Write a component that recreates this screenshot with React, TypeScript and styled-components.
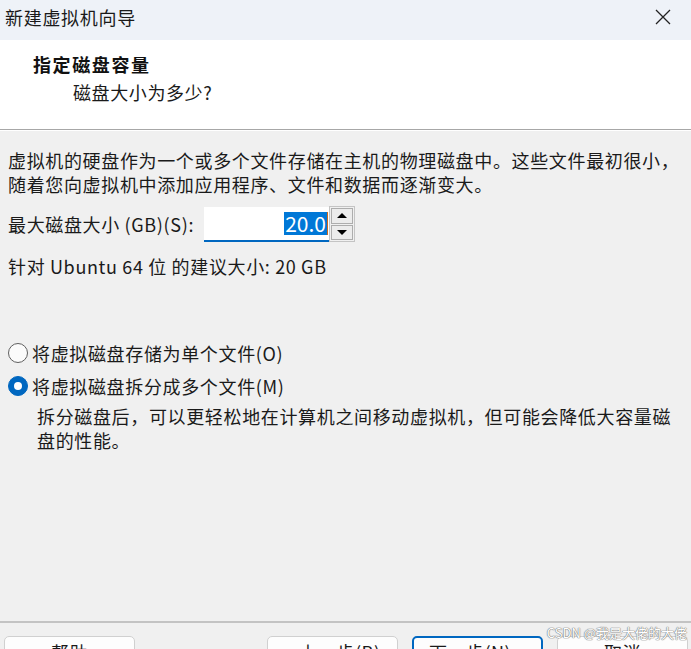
import React from "react";
import styled, { createGlobalStyle } from "styled-components";

const Global = createGlobalStyle`
  html, body { margin: 0; padding: 0; background: #f0f0f0; }
  body { font-family: "Noto Sans CJK SC", "Noto Sans", sans-serif; color: #1a1a1a; }
`;

const Window = styled.div`
  width: 691px;
  height: 649px;
  display: flex;
  flex-direction: column;
  overflow: hidden;
  position: relative;
  background: #f0f0f0;
`;

const TitleBar = styled.div`
  height: 40px;
  flex: none;
  background: #eef2f8;
  display: flex;
  align-items: flex-start;
  justify-content: space-between;
  padding: 4px 18px 0 5px;
  box-sizing: border-box;
`;

const Title = styled.div`
  font-size: 18px;
  line-height: 26px;
  letter-spacing: 0.7px;
  color: #1a1a1a;
`;

const CloseBtn = styled.div`
  width: 20px;
  height: 26px;
  display: flex;
  align-items: center;
  justify-content: center;
`;

const Header = styled.div`
  flex: none;
  height: 90px;
  box-sizing: border-box;
  background: #ffffff;
  border-bottom: 1px solid #a7a7a7;
  padding: 12px 0 0 33px;
  display: flex;
  flex-direction: column;
`;

const Heading = styled.div`
  font-size: 18px;
  font-weight: 700;
  line-height: 24px;
  letter-spacing: 1.6px;
  color: #111;
`;

const Subtitle = styled.div`
  margin-top: 4px;
  padding-left: 40px;
  font-size: 18px;
  line-height: 24px;
  letter-spacing: 0.6px;
`;

const Body = styled.div`
  flex: 1;
  padding: 17px 8px 0 8px;
  display: flex;
  flex-direction: column;
  font-size: 18px;
  letter-spacing: 0.65px;
  border-top: 1px solid #ffffff;
`;

const Para = styled.div`
  line-height: 24px;
  white-space: nowrap;
`;

const Line = styled.div``;

const SizeRow = styled.div`
  margin-top: 10px;
  height: 36px;
  display: flex;
  align-items: center;
`;

const Label = styled.div`
  width: 196px;
  line-height: 24px;
  white-space: nowrap;
`;

const Field = styled.div`
  width: 125px;
  height: 35px;
  box-sizing: border-box;
  background: #fff;
  border-bottom: 2px solid #0067c0;
  display: flex;
  align-items: center;
  justify-content: flex-end;
  padding-right: 1px;
`;

const Selected = styled.span`
  background: #0078d7;
  color: #fff;
  font-size: 21px;
  line-height: 23px;
  letter-spacing: 0;
  padding: 0 1px 0 1px;
  border-right: 1px solid #d06a1a;
`;

const Spinner = styled.div`
  width: 26px;
  height: 36px;
  box-sizing: border-box;
  border: 1px solid #c4c4c4;
  padding: 1px;
  display: flex;
  flex-direction: column;
  gap: 1px;
  background: #f0f0f0;
`;

const SpinBtn = styled.div`
  flex: 1;
  border: 1px solid #adadad;
  background: #ececec;
  display: flex;
  align-items: center;
  justify-content: center;
`;

const Arrow = styled.div<{ $up?: boolean }>`
  width: 0;
  height: 0;
  border-left: 5px solid transparent;
  border-right: 5px solid transparent;
  ${(p) => (p.$up ? "border-bottom: 5px solid #000;" : "border-top: 5px solid #000;")}
`;

const Recommend = styled.div`
  margin-top: 12px;
  line-height: 24px;
`;

const Options = styled.div`
  margin-top: 58px;
  display: flex;
  flex-direction: column;
`;

const RadioRow = styled.div`
  height: 33px;
  display: flex;
  align-items: center;
  gap: 4px;
`;

const Radio = styled.div<{ $checked?: boolean }>`
  width: 20px;
  height: 20px;
  box-sizing: border-box;
  border-radius: 50%;
  flex: none;
  display: flex;
  align-items: center;
  justify-content: center;
  ${(p) =>
    p.$checked
      ? "background: #0067c0; border: 1px solid #0067c0;"
      : "background: #fbfbfb; border: 1px solid #5f5f5f;"}
`;

const Dot = styled.div`
  width: 8px;
  height: 8px;
  border-radius: 50%;
  background: #fff;
`;

const Desc = styled.div`
  margin-top: 2px;
  padding-left: 29px;
  line-height: 24px;
  white-space: nowrap;
`;

const Footer = styled.div`
  flex: none;
  height: 28px;
  box-sizing: border-box;
  border-top: 2px solid #c3c3c3;
  padding: 13px 3px 0 4px;
  display: flex;
  gap: 14px;
`;

const Spacer = styled.div`
  flex: 1;
`;

const Button = styled.div<{ $primary?: boolean }>`
  width: 131px;
  height: 32px;
  flex: none;
  box-sizing: border-box;
  background: #fdfdfd;
  border-radius: 5px;
  border: ${(p) => (p.$primary ? "2px solid #0067c0" : "1px solid #d0d0d0")};
  display: flex;
  justify-content: center;
  align-items: center;
  font-size: 18px;
  letter-spacing: 0.5px;
  white-space: pre;
`;

const Watermark = styled.div`
  position: absolute;
  right: 4px;
  top: 623px;
  font-size: 13px;
  letter-spacing: 0;
  color: #ffffff;
  white-space: nowrap;
  text-shadow: 0 0 1px #7a7a7a, 0 0 1px #7a7a7a, 0 0 1px #7a7a7a;
`;

export default function App() {
  return (
    <>
      <Global />
      <Window>
        <TitleBar>
          <Title>新建虚拟机向导</Title>
          <CloseBtn>
            <svg width="16" height="16" viewBox="0 0 16 16">
              <path d="M1 1 L15 15 M15 1 L1 15" stroke="#222" strokeWidth="1.3" fill="none" />
            </svg>
          </CloseBtn>
        </TitleBar>
        <Header>
          <Heading>指定磁盘容量</Heading>
          <Subtitle>磁盘大小为多少?</Subtitle>
        </Header>
        <Body>
          <Para>
            <Line>虚拟机的硬盘作为一个或多个文件存储在主机的物理磁盘中。这些文件最初很小，</Line>
            <Line>随着您向虚拟机中添加应用程序、文件和数据而逐渐变大。</Line>
          </Para>
          <SizeRow>
            <Label>最大磁盘大小 (GB)(S):</Label>
            <Field>
              <Selected>20.0</Selected>
            </Field>
            <Spinner>
              <SpinBtn>
                <Arrow $up />
              </SpinBtn>
              <SpinBtn>
                <Arrow />
              </SpinBtn>
            </Spinner>
          </SizeRow>
          <Recommend>针对 Ubuntu 64 位 的建议大小: 20 GB</Recommend>
          <Options>
            <RadioRow>
              <Radio />
              <span>将虚拟磁盘存储为单个文件(O)</span>
            </RadioRow>
            <RadioRow>
              <Radio $checked>
                <Dot />
              </Radio>
              <span>将虚拟磁盘拆分成多个文件(M)</span>
            </RadioRow>
            <Desc>
              <Line>拆分磁盘后，可以更轻松地在计算机之间移动虚拟机，但可能会降低大容量磁</Line>
              <Line>盘的性能。</Line>
            </Desc>
          </Options>
        </Body>
        <Footer>
          <Button>帮助</Button>
          <Spacer />
          <Button>{"< 上一步(B)"}</Button>
          <Button $primary>{"下一步(N) >"}</Button>
          <Button>取消</Button>
        </Footer>
        <Watermark>CSDN @我是大佬的大佬</Watermark>
      </Window>
    </>
  );
}
